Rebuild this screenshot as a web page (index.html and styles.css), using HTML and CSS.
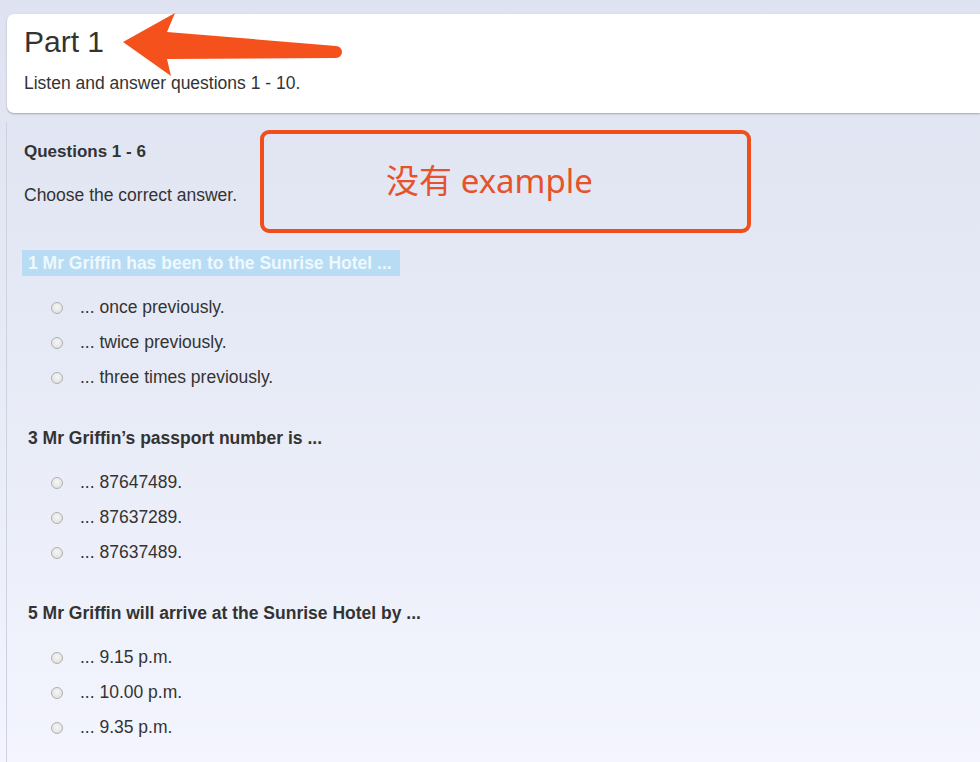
FILE: index.html
```html
<!DOCTYPE html>
<html lang="en">
<head>
<meta charset="utf-8">
<title>Part 1</title>
<link rel="stylesheet" href="styles.css">
</head>
<body>
<div class="page">
  <header class="part-card">
    <h1 class="part-title">Part 1</h1>
    <p class="part-sub">Listen and answer questions 1 - 10.</p>
  </header>

  <section class="panel">
    <h2 class="group-title">Questions 1 - 6</h2>
    <p class="instr">Choose the correct answer.</p>

    <div class="question">
      <h3 class="q-title selected"><span>1</span> Mr Griffin has been to the Sunrise Hotel ...</h3>
      <ul class="opts">
        <li><span class="radio"></span>... once previously.</li>
        <li><span class="radio"></span>... twice previously.</li>
        <li><span class="radio"></span>... three times previously.</li>
      </ul>
    </div>

    <div class="question">
      <h3 class="q-title"><span>3</span> Mr Griffin’s passport number is ...</h3>
      <ul class="opts">
        <li><span class="radio"></span>... 87647489.</li>
        <li><span class="radio"></span>... 87637289.</li>
        <li><span class="radio"></span>... 87637489.</li>
      </ul>
    </div>

    <div class="question">
      <h3 class="q-title"><span>5</span> Mr Griffin will arrive at the Sunrise Hotel by ...</h3>
      <ul class="opts">
        <li><span class="radio"></span>... 9.15 p.m.</li>
        <li><span class="radio"></span>... 10.00 p.m.</li>
        <li><span class="radio"></span>... 9.35 p.m.</li>
      </ul>
    </div>
  </section>

  <svg class="arrow" width="360" height="90" viewBox="0 0 360 90" aria-hidden="true">
    <path d="M123 42 L175 13 L167 32 L336 46 A6 6 0 0 1 336 58 L167 59 L171 76 Z" fill="#f4511c"/>
  </svg>

  <div class="note">没有 example</div>
</div>
</body>
</html>
```

FILE: styles.css
```css
* { box-sizing: border-box; }

html, body {
  margin: 0;
  padding: 0;
}

body {
  min-height: 762px;
  background: linear-gradient(180deg, #dfe3f1 0%, #e6eaf6 45%, #edf0fa 75%, #f4f5fe 100%);
  font-family: "Liberation Sans", Arial, sans-serif;
  color: #333;
  overflow: hidden;
}

.page {
  position: relative;
  width: 980px;
  height: 762px;
  padding-top: 14px;
}

.part-card {
  margin-left: 7px;
  height: 99px;
  background: #fff;
  border-radius: 7px 0 0 7px;
  box-shadow: 0 1px 2px rgba(0, 0, 0, 0.28);
  padding: 11px 0 0 17px;
}

.part-title {
  margin: 0;
  font-size: 30px;
  line-height: 34px;
  font-weight: normal;
  color: #333;
}

.part-sub {
  margin: 14px 0 0;
  font-size: 17.5px;
  line-height: 20px;
  color: #333;
}

.panel {
  margin: 9px 0 0 6px;
  border-left: 1px solid #cdd2e3;
  padding: 20px 0 0 17px;
  height: 640px;
}

.group-title {
  margin: 0;
  font-size: 17px;
  line-height: 20px;
  font-weight: bold;
  color: #333;
}

.instr {
  margin: 23px 0 45px;
  font-size: 17.5px;
  line-height: 20px;
}

.question {
  margin-bottom: 30px;
}

.q-title {
  display: inline-block;
  margin: 0 0 0 -2px;
  padding: 1px 8px 0 6px;
  font-size: 17.5px;
  line-height: 25px;
  font-weight: bold;
  color: #333;
}

.q-title.selected {
  background: #b7dcf3;
  color: #eef8ff;
}

.opts {
  list-style: none;
  margin: 13px 0 0;
  padding: 1px 0 0 27px;
}

.opts li {
  display: flex;
  align-items: center;
  height: 35px;
  font-size: 17.5px;
  color: #333;
}

.radio {
  width: 12px;
  height: 12px;
  margin-right: 17px;
  border-radius: 50%;
  border: 1px solid #b0b0b0;
  background: radial-gradient(circle at 50% 40%, #f6f6f6 0%, #dcdcdc 100%);
  flex: none;
}

.arrow {
  position: absolute;
  left: 0;
  top: 0;
}

.note {
  position: absolute;
  left: 260px;
  top: 130px;
  width: 491px;
  height: 103px;
  border: 4px solid #ee4f1c;
  border-radius: 9px;
  display: flex;
  align-items: center;
  justify-content: center;
  padding: 0 32px 6px 0;
  font-family: "Noto Sans", "Noto Sans CJK SC", sans-serif;
  font-size: 33px;
  color: #e6532b;
}
```
